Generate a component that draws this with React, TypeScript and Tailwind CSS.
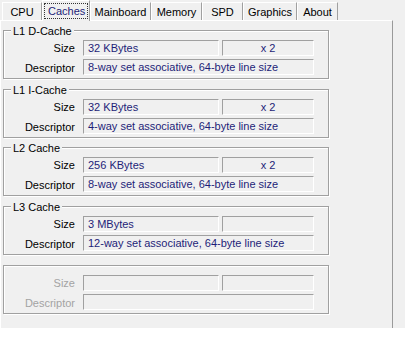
import React from "react";

type G = { title: string; size: string; mult: string; desc: string; disabled?: boolean; mt: string };

const groups: G[] = [
  { title: "L1 D-Cache", size: "32 KBytes", mult: "x 2", desc: "8-way set associative, 64-byte line size", mt: "" },
  { title: "L1 I-Cache", size: "32 KBytes", mult: "x 2", desc: "4-way set associative, 64-byte line size", mt: "mt-[10px]" },
  { title: "L2 Cache", size: "256 KBytes", mult: "x 2", desc: "8-way set associative, 64-byte line size", mt: "mt-[9px]" },
  { title: "L3 Cache", size: "3 MBytes", mult: "", desc: "12-way set associative, 64-byte line size", mt: "mt-[10px]" },
  { title: "", size: "", mult: "", desc: "", disabled: true, mt: "mt-[10px]" },
];

const tabs = [
  { name: "CPU", w: "w-[40px]" },
  { name: "Caches", w: "w-[48px]", sel: true },
  { name: "Mainboard", w: "w-[61px]" },
  { name: "Memory", w: "w-[51px]" },
  { name: "SPD", w: "w-[41px]" },
  { name: "Graphics", w: "w-[54px]" },
  { name: "About", w: "w-[41px]" },
];

const field =
  "h-[16px] pt-[1px] border-t border-l border-t-[#a0a0a0] border-l-[#a0a0a0] border-b border-r border-b-white border-r-white flex items-center text-[#1e1e78] leading-none";

function Group({ g }: { g: G }) {
  const lbl = g.disabled ? "text-[#a3a3a3]" : "text-black";
  return (
    <div
      className={`relative ml-[2px] w-[326px] h-[49px] border border-[#a0a0a0] shadow-[inset_1px_1px_0_white,1px_1px_0_white] pt-[8px] ${g.mt}`}
    >
      {g.title && (
        <div className="absolute left-[7px] top-[-7px] bg-[#f0f0f0] px-[2px] h-[14px] leading-[14px] text-black">
          {g.title}
        </div>
      )}
      <div className="flex items-center">
        <div className={`w-[71px] pt-[1px] text-right ${lbl}`}>Size</div>
        <div className={`ml-[8px] w-[136px] pl-[4px] ${field}`}>{g.size}</div>
        <div className={`ml-[3px] w-[92px] justify-center ${field}`}>{g.mult}</div>
      </div>
      <div className="flex items-center mt-[2px]">
        <div className={`w-[71px] pt-[1px] text-right ${lbl}`}>Descriptor</div>
        <div className={`ml-[8px] w-[231px] pl-[4px] ${field}`}>{g.desc}</div>
      </div>
    </div>
  );
}

export default function App() {
  return (
    <div
      className="w-[405px] h-[341px] bg-white overflow-hidden text-[11px]"
      style={{ fontFamily: '"Liberation Sans", Arial, sans-serif' }}
    >
      <div className="h-[328px] bg-[#f0f0f0]">
        <div className="flex items-end h-[20px] pl-[2px]">
          {tabs.map((t) =>
            t.sel ? (
              <div
                key={t.name}
                className={`${t.w} h-[21px] mb-[-1px] relative z-10 bg-[#f0f0f0] border-t border-l border-white border-r border-r-[#a0a0a0] flex items-start justify-center pt-[2px]`}
              >
                <span className="border border-dotted border-[#333] px-[3px] h-[16px] leading-[15px] w-[44px] text-center text-[#1e1e78]">
                  {t.name}
                </span>
              </div>
            ) : (
              <div
                key={t.name}
                className={`${t.w} h-[18px] pt-[2px] border-t border-l border-white border-r border-r-[#a0a0a0] flex items-center justify-center text-black`}
              >
                {t.name}
              </div>
            )
          )}
        </div>
        <div className="w-[393px] h-[308px] border-t border-white border-l border-r border-r-[#9a9a9a] pt-[9px]">
          {groups.map((g, i) => (
            <Group key={i} g={g} />
          ))}
        </div>
      </div>
    </div>
  );
}
